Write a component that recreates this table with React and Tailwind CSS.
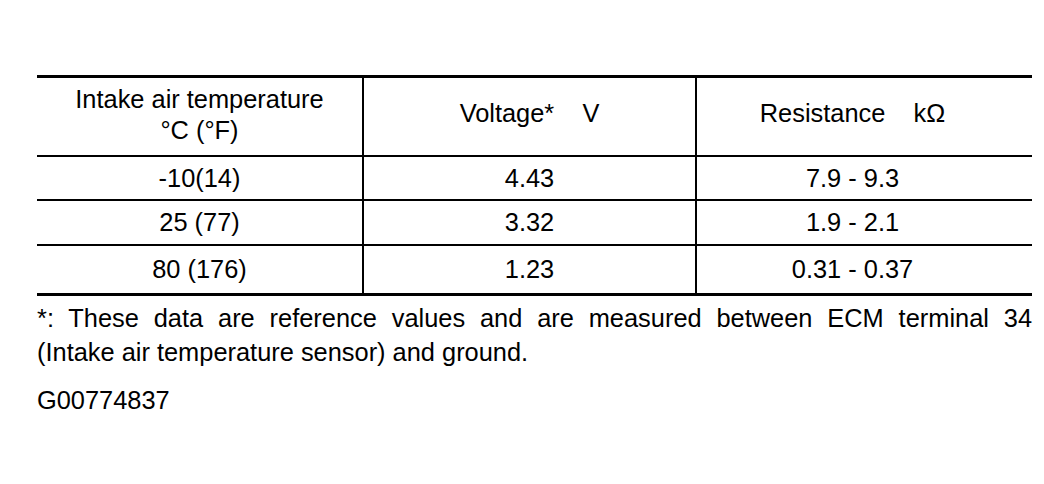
import React from 'react'

const rows = [
    { cells: ['-10(14)', '4.43', '7.9 - 9.3'], height: 'h-[44px]' },
    { cells: ['25 (77)', '3.32', '1.9 - 2.1'], height: 'h-[45px]' },
    { cells: ['80 (176)', '1.23', '0.31 - 0.37'], height: 'h-[49px]' },
]

export default function App() {
    return (
        <div className="w-[1044px] h-[484px] bg-white text-black font-['Liberation_Sans',Arial,sans-serif] text-[25.4px]">
            <div className="pt-[75px] pl-[37px] w-[1032px]">
                {/* Table */}
                <div className="border-y-[3px] border-black">
                    <div className="grid grid-cols-[325px_333px_1fr] h-[77px] text-center">
                        <div className="flex items-center justify-center pb-[4px] leading-[31px]">
                            <p>Intake air temperature<br />°C (°F)</p>
                        </div>
                        <div className="flex items-center justify-center pb-[6px] border-l-2 border-black whitespace-pre">
                            Voltage*    V
                        </div>
                        <div className="flex items-center justify-center pb-[6px] pr-[24px] border-l-2 border-black whitespace-pre">
                            Resistance    kΩ
                        </div>
                    </div>
                    {rows.map((row, index) => (
                        <div key={index} className={`grid grid-cols-[325px_333px_1fr] border-t-2 border-black text-center ${row.height}`}>
                            <div className="flex items-center justify-center">{row.cells[0]}</div>
                            <div className="flex items-center justify-center border-l-2 border-black">{row.cells[1]}</div>
                            <div className="flex items-center justify-center pr-[24px] border-l-2 border-black">{row.cells[2]}</div>
                        </div>
                    ))}
                </div>

                {/* Footnote */}
                <div className="mt-[5px] leading-[34px]">
                    <p className="text-justify [text-align-last:justify]">
                        *: These data are reference values and are measured between ECM terminal 34
                    </p>
                    <p>(Intake air temperature sensor) and ground.</p>
                </div>
                <p className="mt-[14px] leading-[34px]">G00774837</p>
            </div>
        </div>
    )
}
